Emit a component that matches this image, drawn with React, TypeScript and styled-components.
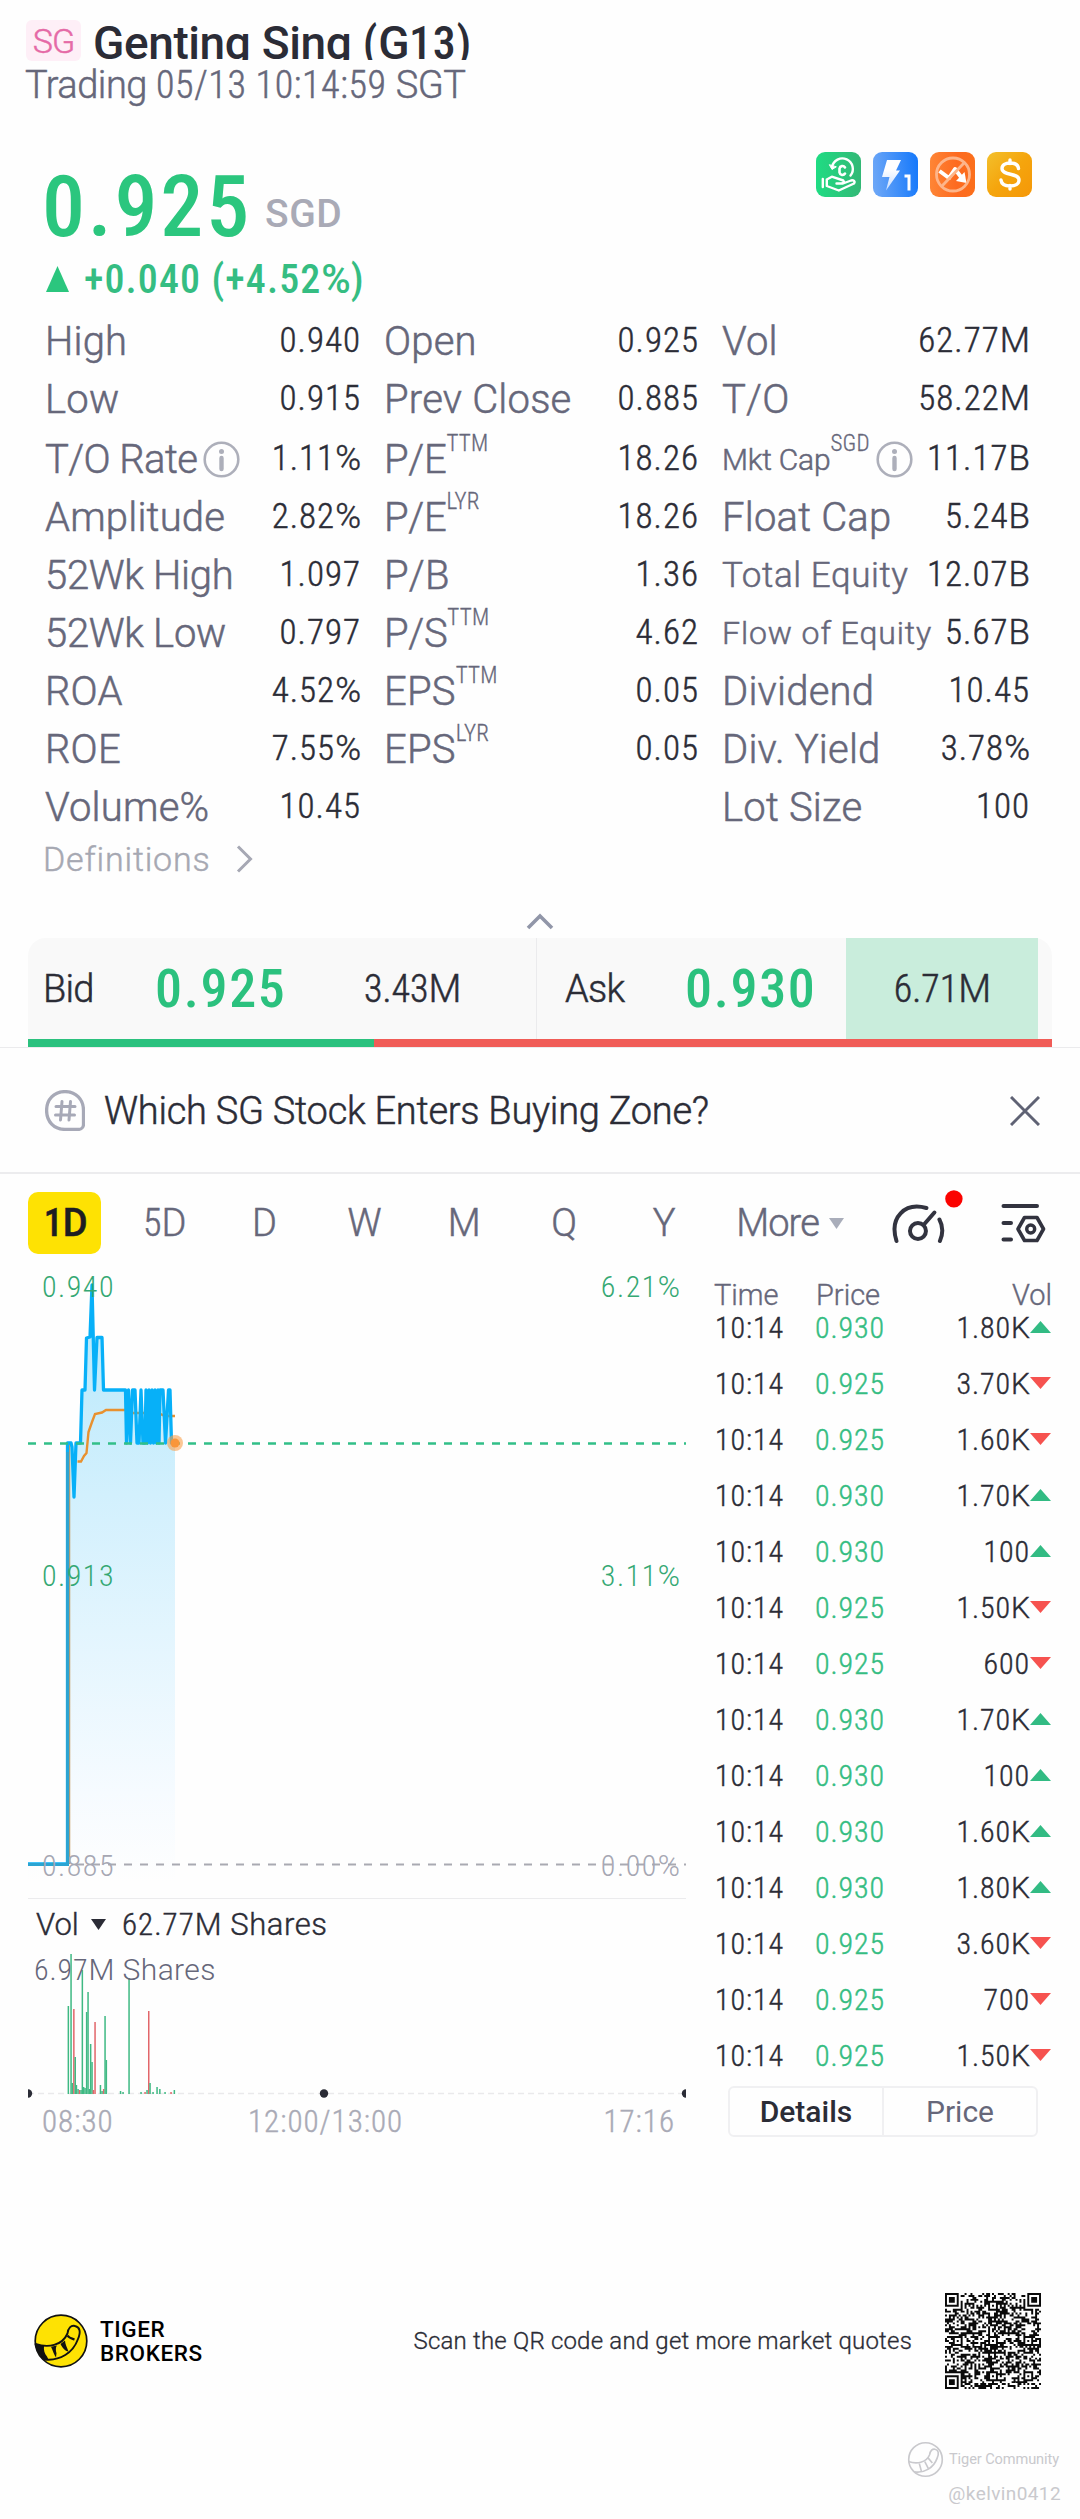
import React from "react";
import styled, { createGlobalStyle, css } from "styled-components";

const GREEN = "#2bc17e";
const INK = "#2b2c36";
const MUTED = "#66677a";
const FAINT = "#a9aab6";
const RED = "#f6524f";

const Global = createGlobalStyle`
  * { box-sizing: border-box; }
  body { margin: 0; background: #fefefe; }
`;

const WIDE = 100;
const NARROW = 75;

const type = (size: number, weight = 300, spacing = 0, stretch = WIDE) => css`
  font-family: Roboto, "Liberation Sans", sans-serif;
  font-size: ${size}px;
  font-weight: ${weight};
  font-stretch: ${stretch}%;
  letter-spacing: ${spacing}px;
  white-space: nowrap;
  -webkit-text-stroke: ${weight === 300 ? size * 0.013 : 0}px;
`;

const Page = styled.main`
  width: 1080px;
  height: 2519px;
  overflow: hidden;
  display: flex;
  flex-direction: column;
  background: #fefefe;
  color: ${INK};
`;

/* Digits are set narrow, letters at full width */
const WideRun = styled.span<{ $ls: number }>`
  font-stretch: 100%;
  letter-spacing: ${(p) => p.$ls}px;
`;
const WideSvgRun = styled.tspan<{ $ls: number }>`
  font-stretch: 100%;
  letter-spacing: ${(p) => p.$ls}px;
`;
const Mixed = ({ text, svg, ls = 0 }: { text: string; svg?: boolean; ls?: number }) => {
  const Run = svg ? WideSvgRun : WideRun;
  return (
    <>
      {text.split(/([A-Za-z%]+)/).map((run, i) =>
        i % 2 ? <Run key={i} $ls={ls}>{run}</Run> : run
      )}
    </>
  );
};

/* ---------- header ---------- */
const Header = styled.header`
  padding: 20px 0 0 26px;
  height: 152px;
`;
const TitleRow = styled.div`
  display: flex;
  gap: 12px;
  height: 41px;
`;
const MarketTag = styled.span`
  ${type(34, 300, -1)}
  width: 55px;
  height: 41px;
  line-height: 43px;
  text-align: center;
  color: #e56aa6;
  background: #feeff7;
  border-radius: 6px;
`;
const Title = styled.h1`
  ${type(46, 500, 0.7, NARROW)}
  margin: 0;
  height: 40px;
  line-height: 46px;
  overflow: hidden;
`;
const Status = styled.div`
  ${type(38, 300, 0.6, NARROW)}
  margin-left: -1px;
  line-height: 49px;
  color: ${MUTED};
`;

/* ---------- quote ---------- */
const Quote = styled.section`
  display: flex;
  justify-content: space-between;
  height: 160px;
  padding: 0 48px 0 46px;
`;
const QuoteMain = styled.div`
  padding-top: 12px;
`;
const PriceRow = styled.div`
  display: flex;
  align-items: center;
  gap: 13px;
  height: 86px;
  margin-left: -4px;
`;
const Price = styled.span`
  ${type(86, 500, 2.8, NARROW)}
  line-height: 86px;
  color: #2bc67e;
`;
const Currency = styled.span`
  ${type(39, 500, 0.6, WIDE)}
  padding-top: 13px;
  color: ${FAINT};
`;
const Change = styled.div`
  ${type(40, 500, 1.1, NARROW)}
  display: flex;
  align-items: center;
  gap: 15px;
  height: 58px;
  color: #35bd82;
`;
const Badges = styled.div`
  display: flex;
  gap: 12px;
  height: 45px;
`;

/* ---------- statistics ---------- */
const Stats = styled.section`
  display: grid;
  grid-template-columns: 315px 314px 307px;
  column-gap: 24px;
  padding-left: 45px;
  height: 524px;
`;
const StatColumn = styled.div`
  display: flex;
  flex-direction: column;
`;
const StatRow = styled.div<{ $tall?: boolean }>`
  display: flex;
  align-items: center;
  justify-content: space-between;
  height: ${(p) => (p.$tall ? 60 : 58)}px;
  padding-top: ${(p) => (p.$tall ? 2 : 0)}px;
`;
const StatName = styled.span<{ $size?: number; $ls?: number }>`
  ${type(40)}
  font-size: ${(p) => p.$size ?? 40}px;
  letter-spacing: ${(p) => p.$ls ?? 0.2}px;
  display: flex;
  align-items: center;
  color: ${MUTED};
`;
const Sup = styled.span`
  ${type(23, 300, 0.2, NARROW)}
  margin-bottom: 30px;
  line-height: 26px;
`;
const StatValue = styled.span`
  ${type(35, 300, 1, NARROW)}
  margin: 0 -1px 2px 0;
`;
const InfoIcon = styled.svg`
  width: 37px;
  height: 37px;
  margin-left: 6px;
  flex: none;
`;
const Definitions = styled.div`
  ${type(34, 300, 0.8)}
  display: flex;
  align-items: center;
  gap: 26px;
  height: 46px;
  padding-left: 43px;
  color: #a6a8b2;
`;
const Collapse = styled.div`
  height: 56px;
  padding-top: 30px;
  display: flex;
  justify-content: center;
`;

/* ---------- bid / ask ---------- */
const Depth = styled.section`
  margin: 0 28px;
  height: 109px;
`;
const DepthRow = styled.div`
  display: flex;
  height: 101px;
  background: #f9f9f9;
  border-radius: 18px 18px 0 0;
  padding-right: 14px;
`;
const DepthSide = styled.div<{ $w: number }>`
  width: ${(p) => p.$w}px;
  display: flex;
  align-items: center;
  padding-left: ${(p) => (p.$w > 505 ? 15 : 28)}px;
  & + & { border-left: 1px solid #ebebed; }
`;
const DepthName = styled.span<{ $w: number }>`
  ${type(38, 300, -0.8)}
  width: ${(p) => p.$w}px;
`;
const DepthPrice = styled.span<{ $w: number }>`
  ${type(54, 500, 1.7, NARROW)}
  width: ${(p) => p.$w}px;
  color: ${GREEN};
`;
const DepthVolume = styled.span<{ $hot?: boolean }>`
  ${type(38, 300, 0, NARROW)}
  ${(p) =>
    p.$hot &&
    css`
      align-self: stretch;
      width: 192px;
      display: flex;
      align-items: center;
      justify-content: center;
      padding-left: 1px;
      background: #c9eddc;
    `}
`;
const DepthBar = styled.div`
  display: flex;
  height: 8px;
  background: #f05c57;
  &::before {
    content: "";
    width: 346px;
    background: ${GREEN};
  }
`;

/* ---------- topic banner ---------- */
const Topic = styled.section`
  ${type(38, 300, -0.25)}
  display: flex;
  align-items: center;
  height: 127px;
  padding: 1px 40px 0 45px;
  border-top: 1px solid #ebebed;
  border-bottom: 2px solid #ececee;
`;
const TopicText = styled.span`
  margin-left: 19px;
  flex: 1;
`;

/* ---------- period tabs ---------- */
const Tabs = styled.nav`
  display: flex;
  align-items: center;
  height: 98px;
  padding: 0 34px 0 28px;
`;
const Tab = styled.span<{ $on?: boolean }>`
  ${type(38, 300, 0, NARROW)}
  width: 73px;
  height: 62px;
  margin-right: 27px;
  line-height: 62px;
  text-align: center;
  color: ${MUTED};
  ${(p) =>
    p.$on &&
    css`
      padding-left: 2px;
      font-weight: 500;
      color: #1d1d22;
      background: #fee203;
      border-radius: 10px;
    `}
`;
const More = styled.span`
  ${type(38, 300, -0.9)}
  display: flex;
  align-items: center;
  justify-content: space-between;
  margin: 0 46px 0 9px;
  width: 108px;
  color: ${MUTED};
`;
const SettingsSlot = styled.div`
  margin-left: 37px;
  height: 40px;
`;

/* ---------- chart and trades ---------- */
const Body = styled.div`
  display: flex;
  height: 942px;
  padding-left: 28px;
`;
const ChartColumn = styled.section`
  width: 658px;
`;
const PriceChart = styled.svg`
  display: block;
  width: 658px;
  height: 626px;
`;
const VolumePanel = styled.div`
  border-top: 1px solid #ebebed;
`;
const VolumeHead = styled.div`
  ${type(31, 300, 1, NARROW)}
  display: flex;
  align-items: center;
  height: 51px;
  padding-left: 8px;
`;
const VolName = styled.span`
  width: 55px;
`;
const VolTotal = styled.span`
  margin-left: 16px;
`;
const VolumeChart = styled.svg`
  display: block;
  width: 658px;
  height: 152px;
`;
const TimeAxis = styled.div`
  ${type(31, 300, 1, NARROW)}
  display: flex;
  padding: 0 11px 0 14px;
  height: 40px;
  line-height: 39px;
  color: ${FAINT};
`;
const TimeMark = styled.span`
  &:first-child { width: 206px; }
  &:last-child { margin-left: auto; }
`;
const Trades = styled.section`
  width: 366px;
  padding: 6px 0 0 28px;
`;
const TradeHead = styled.div`
  ${type(29)}
  display: grid;
  grid-template-columns: 102px 120px 1fr;
  height: 32px;
  line-height: 34px;
  width: 338px;
  color: ${MUTED};
  span:last-child { text-align: right; }
`;
const TradeRow = styled.div`
  ${type(30, 300, 0.9, NARROW)}
  display: grid;
  grid-template-columns: 100px 117px 98px 22px;
  align-items: center;
  height: 56px;
`;
const TradePrice = styled.span`
  color: #35bd82;
`;
const TradeVolume = styled.span`
  text-align: right;
`;
const TradeList = styled.div`
  margin-top: -11px;
  padding-left: 1px;
`;
const Switcher = styled.div`
  display: flex;
  width: 310px;
  height: 51px;
  margin: 3px 0 0 14px;
  border: 2px solid #f0f0f2;
  border-radius: 6px;
`;
const SwitchItem = styled.span<{ $on?: boolean }>`
  ${type(30, 400, 0)}
  flex: 1;
  line-height: 48px;
  text-align: center;
  color: ${(p) => (p.$on ? INK : MUTED)};
  font-weight: ${(p) => (p.$on ? 500 : 400)};
  & + & { border-left: 2px solid #f0f0f2; }
`;

/* ---------- footer ---------- */
const Footer = styled.footer`
  display: flex;
  align-items: center;
  height: 98px;
  margin-top: 78px;
  padding: 0 39px 0 34px;
`;
const BrandName = styled.div`
  ${type(22.5, 500, 0.6)}
  line-height: 24px;
  margin-left: 12px;
  color: #000;
`;
const ScanHint = styled.span`
  ${type(24, 300, 0.2)}
  margin: 0 33px 0 auto;
`;
const Watermark = styled.div`
  display: flex;
  flex-direction: column;
  align-items: flex-end;
  margin: 45px 19px 0 0;
  color: #c9c9cd;
`;
const WatermarkRow = styled.div`
  ${type(14.6, 400, -0.1)}
  display: flex;
  align-items: center;
  gap: 5px;
  height: 48px;
  margin-right: 2px;
`;
const WatermarkUser = styled.span`
  ${type(19, 400, 0.4)}
  line-height: 22px;
`;

/* ---------- data ---------- */
type Stat = { n: string; v: string; sup?: string; info?: boolean; size?: number; ls?: number } | null;
const COLUMNS: Stat[][] = [
  [
    { n: "High", v: "0.940" },
    { n: "Low", v: "0.915" },
    { n: "T/O Rate", v: "1.11%", info: true, ls: -0.6 },
    { n: "Amplitude", v: "2.82%" },
    { n: "52Wk High", v: "1.097", ls: -0.3 },
    { n: "52Wk Low", v: "0.797", ls: -0.3 },
    { n: "ROA", v: "4.52%" },
    { n: "ROE", v: "7.55%" },
    { n: "Volume%", v: "10.45" },
  ],
  [
    { n: "Open", v: "0.925" },
    { n: "Prev Close", v: "0.885" },
    { n: "P/E", sup: "TTM", v: "18.26", ls: -0.3 },
    { n: "P/E", sup: "LYR", v: "18.26", ls: -0.3 },
    { n: "P/B", v: "1.36" },
    { n: "P/S", sup: "TTM", v: "4.62", ls: -0.3 },
    { n: "EPS", sup: "TTM", v: "0.05" },
    { n: "EPS", sup: "LYR", v: "0.05" },
    null,
  ],
  [
    { n: "Vol", v: "62.77M" },
    { n: "T/O", v: "58.22M" },
    { n: "Mkt Cap", sup: "SGD", v: "11.17B", info: true, size: 30, ls: -0.2 },
    { n: "Float Cap", v: "5.24B" },
    { n: "Total Equity", v: "12.07B", size: 35, ls: 0.6 },
    { n: "Flow of Equity", v: "5.67B", size: 32, ls: 0.9 },
    { n: "Dividend", v: "10.45" },
    { n: "Div. Yield", v: "3.78%" },
    { n: "Lot Size", v: "100" },
  ],
];

const TRADES: [string, string, boolean][] = [
  ["0.930", "1.80K", true],
  ["0.925", "3.70K", false],
  ["0.925", "1.60K", false],
  ["0.930", "1.70K", true],
  ["0.930", "100", true],
  ["0.925", "1.50K", false],
  ["0.925", "600", false],
  ["0.930", "1.70K", true],
  ["0.930", "100", true],
  ["0.930", "1.60K", true],
  ["0.930", "1.80K", true],
  ["0.925", "3.60K", false],
  ["0.925", "700", false],
  ["0.925", "1.50K", false],
];

/* x offset, height, colour key */
const BARS: [number, number, "g" | "r"][] = [
  [40.3, 88, "g"], [43, 140, "g"], [44.3, 11, "g"], [45.8, 85, "r"], [47.2, 37, "g"], [48.4, 9, "g"], [50, 5, "g"],
  [51.5, 4, "r"], [53, 4, "g"], [54.3, 124, "g"], [55.6, 7, "g"], [57, 6, "g"], [58.6, 82, "g"], [60, 102, "g"],
  [61.3, 5, "g"], [62.6, 50, "g"], [64, 32, "g"], [65.4, 4, "r"], [67, 72, "r"], [72.4, 9, "g"], [74, 3, "g"],
  [75.6, 5, "r"], [77, 78, "g"], [78.3, 34, "g"], [92.5, 3, "g"], [95, 2, "g"], [101, 116, "g"], [113, 2, "g"],
  [117, 2, "r"], [119, 4, "g"], [120.7, 83, "r"], [122, 11, "g"], [125, 2, "g"], [129, 7, "g"], [131.8, 5, "g"],
  [137, 2, "g"], [143, 2, "r"], [146.3, 4, "g"],
];

const LINE =
  "M0 592H39.5V171H43L44 175L46 225L48 171H52.5L54 118H57L58.5 66L62 65L64 13L66.5 118L69 65.500H74L75.500 118H97.500" +
  "L98.500 171L100.500 118L102.500 171L104.500 118L107 118L109 171H111L113 118L115 171L117 171L118 118L119.500 171L121 118L122.500 171" +
  "L124 118L125.500 171L127 118L128.500 171L130 118L131 171L132 118H135L137.500 171L140.500 118H142L143.500 171H147";

/* ---------- icons ---------- */
const Info = () => (
  <InfoIcon viewBox="0 0 37 37" fill="none" stroke="#adafba" strokeWidth="2.6">
    <circle cx="18.500" cy="18.500" r="16.800" />
    <path d="M18.500 17v11" strokeWidth="4.400" strokeLinecap="round" />
    <circle cx="18.500" cy="10.500" r="2.500" fill="#adafba" stroke="none" />
  </InfoIcon>
);

const Tri = ({ w, h, up, fill }: { w: number; h: number; up?: boolean; fill: string }) => (
  <svg width={w} height={h} viewBox="0 0 10 10" preserveAspectRatio="none">
    <path d={up ? "M5 0L10 10H0Z" : "M0 0H10L5 10Z"} fill={fill} />
  </svg>
);

const BadgeIcons = () => (
  <Badges>
    <svg width="45" height="45" viewBox="0 0 45 45">
      <defs>
        <linearGradient id="b1" x1="0" x2="1"><stop stopColor="#1fdc83" /><stop offset="1" stopColor="#33b876" /></linearGradient>
      </defs>
      <rect width="45" height="45" rx="9" fill="url(#b1)" />
      <g fill="none" stroke="#fff" strokeWidth="2.400" strokeLinecap="round" strokeLinejoin="round">
        <path d="M16 15A10.500 10.500 0 1 1 34.500 23.500" />
        <path d="M13.500 13l2.500 4.500 4-2.500z" fill="#fff" strokeWidth="1" />
        <path d="M29 15.500a3 3 0 0 0-5.500 1v4a3 3 0 0 0 5.500 1" strokeWidth="2.600" />
        <path d="M6.800 27v8M10.800 27.500v6.500l12 4.500L38 31.500c1.500-2-.5-3.800-3-3l-8 3h-6.500M10.800 27.500l5-2.800 11.500 3.800c1.500 1.500 0 3-2 3" />
      </g>
    </svg>
    <svg width="45" height="45" viewBox="0 0 45 45">
      <defs>
        <linearGradient id="b2" x1="0" y1=".4" x2="1" y2=".3"><stop stopColor="#6ba6f7" /><stop offset="1" stopColor="#1679fb" /></linearGradient>
        <linearGradient id="b2b" x1="0" y1="0" x2="0" y2="1"><stop offset=".3" stopColor="#fff" /><stop offset="1" stopColor="#c5dcff" /></linearGradient>
      </defs>
      <rect width="45" height="45" rx="9" fill="url(#b2)" />
      <path d="M14 8H28L23 18.500H27L13 38.500L16.500 25H9Z" fill="url(#b2b)" />
      <path d="M31.500 24H36V38.500" fill="none" stroke="#fff" strokeWidth="3" />
    </svg>
    <svg width="45" height="45" viewBox="0 0 45 45">
      <defs>
        <linearGradient id="b3" x1="0" x2="1"><stop stopColor="#fe8536" /><stop offset=".6" stopColor="#fd6a20" /><stop offset="1" stopColor="#fb6f1b" /></linearGradient>
      </defs>
      <rect width="45" height="45" rx="9" fill="url(#b3)" />
      <path d="M9.500 19l9.500 7 6-9 6 8" fill="none" stroke="#fff" strokeWidth="4" strokeLinejoin="round" />
      <path d="M26 29l8.500-9 2 11z" fill="#fff" />
      <g fill="none" stroke="#fdb58a" strokeWidth="2.800"><circle cx="23" cy="22.500" r="16.500" /><path d="M34 11L12 34" /></g>
    </svg>
    <svg width="45" height="45" viewBox="0 0 45 45">
      <defs>
        <linearGradient id="b4" x1="0" y1="0" x2="1" y2="1"><stop stopColor="#f3c02c" /><stop offset=".5" stopColor="#f5a50d" /><stop offset="1" stopColor="#f59708" /></linearGradient>
      </defs>
      <rect width="45" height="45" rx="9" fill="url(#b4)" />
      <path d="M31.500 16.500C31 12.500 27.500 11 23 11s-8 2-8 5.500c0 7.500 17 4 17 11.500 0 4-4 6-8.800 6S14.500 32 14 28M23 8v3.500M23 33.500V37" fill="none" stroke="#fff" strokeWidth="3.400" strokeLinecap="round" />
    </svg>
  </Badges>
);

const HashIcon = () => (
  <svg width="40" height="41" viewBox="0 0 40 41" fill="none" stroke="#a7a9b7" strokeLinecap="round">
    <path d="M20 1.600C9 1.600 1.600 9.500 1.600 20.500S9 39.400 20 39.400H33.500a5 5 0 0 0 5-5V20.500C38.500 9.500 31 1.600 20 1.600Z" strokeWidth="3.300" />
    <path d="M17 11.500L15.500 30M25.500 11.500L24 30M11 16.500H30M10.500 25H29.500" strokeWidth="3" />
  </svg>
);

const GaugeIcon = () => (
  <svg width="74" height="67" viewBox="0 0 74 67" fill="none" stroke="#32333f" strokeWidth="4" strokeLinecap="round">
    <path d="M6.500 51C-1 27 15 12 36.500 18M49.500 29.500C53 36 53.500 43 50 51" />
    <circle cx="28" cy="41" r="8" />
    <path d="M34 34.500L44.500 22.500" />
    <circle cx="64" cy="8.800" r="8.700" fill="#fb0300" stroke="none" />
  </svg>
);

const SettingsIcon = () => (
  <svg width="45" height="40" viewBox="0 0 45 40" fill="none" stroke="#32333f" strokeWidth="4" strokeLinecap="round" strokeLinejoin="round">
    <path d="M2.500 3H36M2.500 20H10M2.500 36.500H10" />
    <path d="M23.500 14.500H36L42.500 26L36 37.500H23.500L17 26Z" strokeWidth="3.600" />
    <circle cx="29.700" cy="26" r="4" strokeWidth="3.400" />
  </svg>
);

const TigerLogo = () => (
  <svg width="54" height="54" viewBox="0 0 54 54" strokeLinejoin="round">
    <circle cx="27" cy="27" r="25.800" fill="#fee203" stroke="#111" strokeWidth="1.700" />
    <path d="M1.500 30C14 34 28 32 33.500 19.500C34 14 37 11 41 12C46 13 47 18 44 25C39 39 26 47 11 45.500C6 41 3 36 1.500 30Z" fill="#fee203" stroke="#111" strokeWidth="1.900" />
    <path d="M1.500 30L10 32C9.500 36 10.500 40 13 42.500L14.500 45.500L11 45.500C6 41 3 36 1.500 30ZM17 32.800L23 31.500C21.500 33 21.800 37 22.500 39L22 43.500C20 41 19 37 17 32.800ZM26.500 30L31 26.500C31 30 33 33 34.500 37.500C31 37 28.500 34 26.500 30Z" fill="#111" />
    <path d="M33.500 21.500C35 24 37.500 24.500 40.500 25.500" fill="none" stroke="#111" strokeWidth="2.200" />
  </svg>
);

/* 49 x 49 code: finder squares, timing lines, alignment marks and a seeded data field */
const QR_N = 49;
const qrPath = (() => {
  const square = (x: number, y: number, cx: number, cy: number, r: number) => {
    const d = Math.max(Math.abs(x - cx), Math.abs(y - cy));
    return d > r ? null : r === 4 ? d === 3 || d <= 1 : d !== 1;
  };
  let seed = 20413;
  let out = "";
  for (let y = 0; y < QR_N; y++)
    for (let x = 0; x < QR_N; x++) {
      seed = (seed * 1103515245 + 12345) % 2147483648;
      let on: boolean = seed / 2147483648 < 0.5;
      if (x === 6 || y === 6) on = (x + y) % 2 === 0;
      for (const cx of [6, 24, 42])
        for (const cy of [6, 24, 42]) {
          const a = square(x, y, cx, cy, 2);
          if (a !== null) on = a;
        }
      for (const [cx, cy] of [[3, 3], [45, 3], [3, 45]]) {
        const f = square(x, y, cx, cy, 4);
        if (f !== null) on = f;
      }
      if (on) out += `M${x} ${y}h1v1h-1z`;
    }
  return out;
})();

const ChartLabel = styled.text`
  ${type(30, 300, 1.5, NARROW)}
`;
const MaxVolume = styled.text`
  ${type(30, 300, 0.9, NARROW)}
  fill: ${MUTED};
`;

export default function App() {
  return (
    <Page>
      <Global />
      <Header>
        <TitleRow>
          <MarketTag>SG</MarketTag>
          <Title><Mixed text="Genting Sing (G13)" ls={-0.4} /></Title>
        </TitleRow>
        <Status><Mixed text="Trading 05/13 10:14:59 SGT" ls={-0.5} /></Status>
      </Header>

      <Quote>
        <QuoteMain>
          <PriceRow>
            <Price>0.925</Price>
            <Currency>SGD</Currency>
          </PriceRow>
          <Change>
            <Tri w={23} h={26} up fill="#2bc67e" />
            <span><Mixed text="+0.040 (+4.52%)" /></span>
          </Change>
        </QuoteMain>
        <BadgeIcons />
      </Quote>

      <Stats>
        {COLUMNS.map((col, c) => (
          <StatColumn key={c}>
            {col.map((s, i) => (
              <StatRow key={i} $tall={i === 2}>
                {s && (
                  <>
                    <StatName $size={s.size} $ls={s.ls}>
                      {s.n}
                      {s.sup && <Sup>{s.sup}</Sup>}
                      {s.info && <Info />}
                    </StatName>
                    <StatValue><Mixed text={s.v} /></StatValue>
                  </>
                )}
              </StatRow>
            ))}
          </StatColumn>
        ))}
      </Stats>
      <Definitions>
        Definitions
        <svg width="17" height="28" viewBox="0 0 17 28" fill="none" stroke="#a6a8b4" strokeWidth="3">
          <path d="M2 1.500L14.500 14L2 26.500" />
        </svg>
      </Definitions>
      <Collapse>
        <svg width="28" height="18" viewBox="0 0 28 18" fill="none" stroke="#9196a8" strokeWidth="3.600">
          <path d="M2 16L14 4L26 16" />
        </svg>
      </Collapse>

      <Depth>
        <DepthRow>
          <DepthSide $w={508}>
            <DepthName $w={112}>Bid</DepthName>
            <DepthPrice $w={209}>0.925</DepthPrice>
            <DepthVolume><Mixed text="3.43M" /></DepthVolume>
          </DepthSide>
          <DepthSide $w={502}>
            <DepthName $w={120}>Ask</DepthName>
            <DepthPrice $w={161}>0.930</DepthPrice>
            <DepthVolume $hot><Mixed text="6.71M" /></DepthVolume>
          </DepthSide>
        </DepthRow>
        <DepthBar />
      </Depth>

      <Topic>
        <HashIcon />
        <TopicText>Which SG Stock Enters Buying Zone?</TopicText>
        <svg width="30" height="30" viewBox="0 0 30 30" stroke="#5f6274" strokeWidth="3">
          <path d="M1 1L29 29M29 1L1 29" />
        </svg>
      </Topic>

      <Tabs>
        {["1D", "5D", "D", "W", "M", "Q", "Y"].map((t, i) => (
          <Tab key={t} $on={i === 0}><Mixed text={t} ls={-0.6} /></Tab>
        ))}
        <More>
          More
          <Tri w={15} h={11} fill="#a9adba" />
        </More>
        <GaugeIcon />
        <SettingsSlot>
          <SettingsIcon />
        </SettingsSlot>
      </Tabs>

      <Body>
        <ChartColumn>
          <PriceChart viewBox="0 0 658 626">
            <defs>
              <linearGradient id="area" x1="0" y1="13" x2="0" y2="610" gradientUnits="userSpaceOnUse">
                <stop offset="0" stopColor="#b5e8fb" />
                <stop offset=".35" stopColor="#d2f0fd" />
                <stop offset=".85" stopColor="#f6fbff" />
                <stop offset="1" stopColor="#fefefe" />
              </linearGradient>
            </defs>
            <path d={LINE + "V610H0Z"} fill="url(#area)" />
            <path d="M0 592.500H658" stroke="#a9aab2" strokeWidth="2" strokeDasharray="8 8" />
            <path d="M41.500 592V171" stroke="#c79a62" strokeWidth="1.500" />
            <path d="M49.500 189.500H53L56 184L58.500 181L60.500 160L64 150L67 142L74 140.500L78 138H98L103 141H130L137 144H147" fill="none" stroke="#e8912f" strokeWidth="2.400" />
            <path d={LINE} fill="none" stroke="#07b0f8" strokeWidth="3.300" strokeLinejoin="round" />
            <path d="M0 592.500H39.500V180" fill="none" stroke="#2ba4d2" strokeWidth="3" />
            <path d="M0 171.500H658" stroke="#32bf88" strokeWidth="2.400" strokeDasharray="8 8" />
            <circle cx="147" cy="171" r="8" fill="#f9a04c" fillOpacity=".6" />
            <circle cx="147" cy="171" r="4.500" fill="#f9963a" />
            <ChartLabel x="14" y="25" fill="#35a873">0.940</ChartLabel>
            <ChartLabel x="14" y="313.500" fill="#35a873">0.913</ChartLabel>
            <ChartLabel x="14" y="604" fill="#a6a7b3">0.885</ChartLabel>
            <ChartLabel x="653" y="25" textAnchor="end" fill="#35a873"><Mixed svg text="6.21%" ls={1} /></ChartLabel>
            <ChartLabel x="653" y="313.500" textAnchor="end" fill="#35a873"><Mixed svg text="3.11%" ls={1} /></ChartLabel>
            <ChartLabel x="653" y="604" textAnchor="end" fill="#a6a7b3"><Mixed svg text="0.00%" ls={1} /></ChartLabel>
          </PriceChart>
          <VolumePanel>
            <VolumeHead>
              <VolName><Mixed text="Vol" /></VolName>
              <Tri w={15} h={11} fill={INK} />
              <VolTotal><Mixed text="62.77M Shares" ls={0.6} /></VolTotal>
            </VolumeHead>
            <VolumeChart viewBox="0 0 658 152">
              <path d="M0 143.500H658" stroke="#e9e9eb" strokeWidth="1.500" strokeDasharray="6 4" />
              {BARS.map(([x, h, k]) => (
                <rect key={x} x={x - 0.700} y={144 - h} width="1.500" height={h} fill={k === "g" ? "#3fb983" : "#e2666a"} />
              ))}
              <circle cx="0" cy="143.500" r="4.200" fill={INK} />
              <circle cx="296" cy="143.500" r="4.200" fill={INK} />
              <circle cx="658" cy="143.500" r="4.200" fill={INK} />
              <MaxVolume x="6" y="29.500"><Mixed svg text="6.97M Shares" ls={0.4} /></MaxVolume>
            </VolumeChart>
            <TimeAxis>
              <TimeMark>08:30</TimeMark>
              <TimeMark>12:00/13:00</TimeMark>
              <TimeMark>17:16</TimeMark>
            </TimeAxis>
          </VolumePanel>
        </ChartColumn>

        <Trades>
          <TradeHead>
            <span>Time</span>
            <span>Price</span>
            <span>Vol</span>
          </TradeHead>
          <TradeList>
            {TRADES.map(([price, vol, up], i) => (
              <TradeRow key={i}>
                <span>10:14</span>
                <TradePrice>{price}</TradePrice>
                <TradeVolume><Mixed text={vol} /></TradeVolume>
                <Tri w={21} h={12} up={up} fill={up ? "#32bb83" : RED} />
              </TradeRow>
            ))}
          </TradeList>
          <Switcher>
            <SwitchItem $on>Details</SwitchItem>
            <SwitchItem>Price</SwitchItem>
          </Switcher>
        </Trades>
      </Body>

      <Footer>
        <TigerLogo />
        <BrandName>
          TIGER
          <br />
          BROKERS
        </BrandName>
        <ScanHint>Scan the QR code and get more market quotes</ScanHint>
        <svg width="96" height="96" viewBox="0 0 49 49">
          <path d={qrPath} fill="#0a0a0a" />
        </svg>
      </Footer>

      <Watermark>
        <WatermarkRow>
          <svg width="37" height="37" viewBox="0 0 54 54" fill="none" stroke="#c9c9cd" strokeWidth="2.400">
            <circle cx="27" cy="27" r="24.500" />
            <path d="M2 30C14 34 28 32 33 20C34 14 37 11 41 12C46 13 47 18 44 25C39 39 26 47 11 45M18 33l3 11M26 30l5 10M31 25l6 7" />
          </svg>
          <span>Tiger Community</span>
        </WatermarkRow>
        <WatermarkUser>@kelvin0412</WatermarkUser>
      </Watermark>
    </Page>
  );
}
